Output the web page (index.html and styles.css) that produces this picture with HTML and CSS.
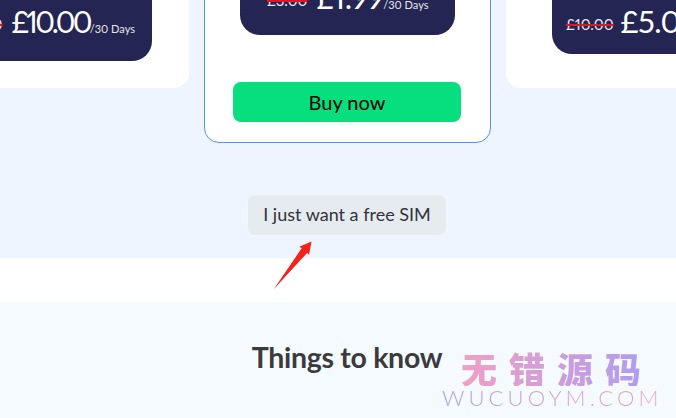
FILE: index.html
```html
<!DOCTYPE html>
<html lang="en">
<head>
<meta charset="utf-8">
<title>Plans</title>
<link rel="stylesheet" href="styles.css">
</head>
<body>
<main class="page">
  <section class="plans-band">
    <div class="plans">
      <article class="card card-left">
        <div class="price price-left">
          <span class="old">£20.00</span><span class="now">£10.00</span><span class="per">/30 Days</span>
        </div>
      </article>
      <article class="card card-main">
        <div class="price price-main">
          <span class="old">£3.00</span><span class="now">£1.99</span><span class="per">/30 Days</span>
        </div>
        <a class="buy">Buy now</a>
      </article>
      <article class="card card-right">
        <div class="price price-right">
          <span class="old">£10.00</span><span class="now">£5.00</span><span class="per">/30 Days</span>
        </div>
      </article>
    </div>
    <div class="free-wrap"><a class="free">I just want a free SIM</a></div>
  </section>
  <div class="gap-band"></div>
  <section class="know-band">
    <h2>Things to know</h2>
  </section>
</main>
<svg class="arrow" width="39" height="49" viewBox="0 0 39 49" aria-hidden="true">
  <path d="M0.500 48.500 L28.700 7.300 L26.300 5.700 L38.500 0.500 L36 14 L34.300 11.700 Z" fill="#f5211b"/>
</svg>
<div class="watermark">
  <div class="wm-cn">无错源码</div>
  <div class="wm-en">WUCUOYM.COM</div>
</div>
</body>
</html>
```

FILE: styles.css
```css
* { box-sizing: border-box; }
html, body { margin: 0; height: 100%; overflow: hidden; background: #fff; }
body { font-family: Lato, "Noto Sans", sans-serif; position: relative; font-variant-numeric: proportional-nums; }
.page { width: 676px; height: 418px; overflow: hidden; }

.plans-band { height: 258px; background: #eef5fe; overflow: hidden; }
.plans { display: flex; align-items: flex-start; gap: 15px; width: 891px; margin: -40px 0 0 -98px; }
.card { width: 287px; background: #fff; border-radius: 15px; flex: none; display: flex; flex-direction: column; }
.card-left, .card-right { height: 128px; }
.card-main { height: 183px; border: 1px solid #4a98ee; padding: 0 29px 0 28px; }

.price { background: #242552; color: #fff; border-radius: 0 0 20px 20px; white-space: nowrap; overflow: hidden; }
.price-left { height: 101px; width: 230px; margin-left: 20px; padding: 43px 17px 0 0; text-align: right; }
.price-main { height: 74px; width: 215px; margin-left: 7px; padding: 19px 0 0 27px; }
.price-right { height: 94px; width: 220px; margin-left: 46px; padding: 42px 0 0 14px; }

.old { font-size: 15px; color: #e6e6ee; vertical-align: 3px; text-decoration: line-through; text-decoration-color: #e0142c; text-decoration-thickness: 1.500px; margin-right: 7px; }
.now { font-size: 31px; letter-spacing: -0.6px; }
.price-left .old { margin-right: 9px; }
.price-left .now { font-size: 30px; letter-spacing: -2.800px; }
.per { font-size: 11px; color: #e6e6ee; }
.price-main .old { margin-right: 9px; }
.price-main .now { font-size: 29px; font-weight: 500; letter-spacing: 0; }

.buy { display: flex; align-items: center; justify-content: center; height: 40px; margin-top: 47px; background: #07df7f; border-radius: 8px; font-size: 20px; color: #000; }
.free-wrap { display: flex; justify-content: center; margin-top: 51px; padding-left: 18px; }
.free { width: 200px; height: 42px; padding-bottom: 2px; display: flex; align-items: center; justify-content: center; background: #e6ebef; border: 1px solid #f3f6fa; border-radius: 8px; font-size: 18px; color: #33343b; }

.gap-band { height: 44px; background: #fff; }
.know-band { height: 116px; background: #f5faff; display: flex; justify-content: center; padding: 38px 0 0 18px; }
h2 { margin: 0; font-size: 28.500px; line-height: 34px; font-weight: 700; color: #3b3b3d; letter-spacing: -0.3px; }

.arrow { position: absolute; left: 273px; top: 241px; }
.watermark { position: absolute; left: 442px; top: 350px; width: 225px; }
.wm-cn { font-family: "Noto Sans CJK SC", sans-serif; font-size: 36px; line-height: 36px; font-weight: 900; letter-spacing: 12px; margin-left: 19px; background: linear-gradient(90deg, #f0a0c4, #a89cf5); -webkit-background-clip: text; background-clip: text; color: transparent; white-space: nowrap; }
.wm-en { font-family: Lato, sans-serif; font-size: 22px; font-weight: 300; line-height: 24px; letter-spacing: 4.100px; background: linear-gradient(90deg, #a89cf5, #f0a0c4); -webkit-background-clip: text; background-clip: text; color: transparent; white-space: nowrap; }
```
